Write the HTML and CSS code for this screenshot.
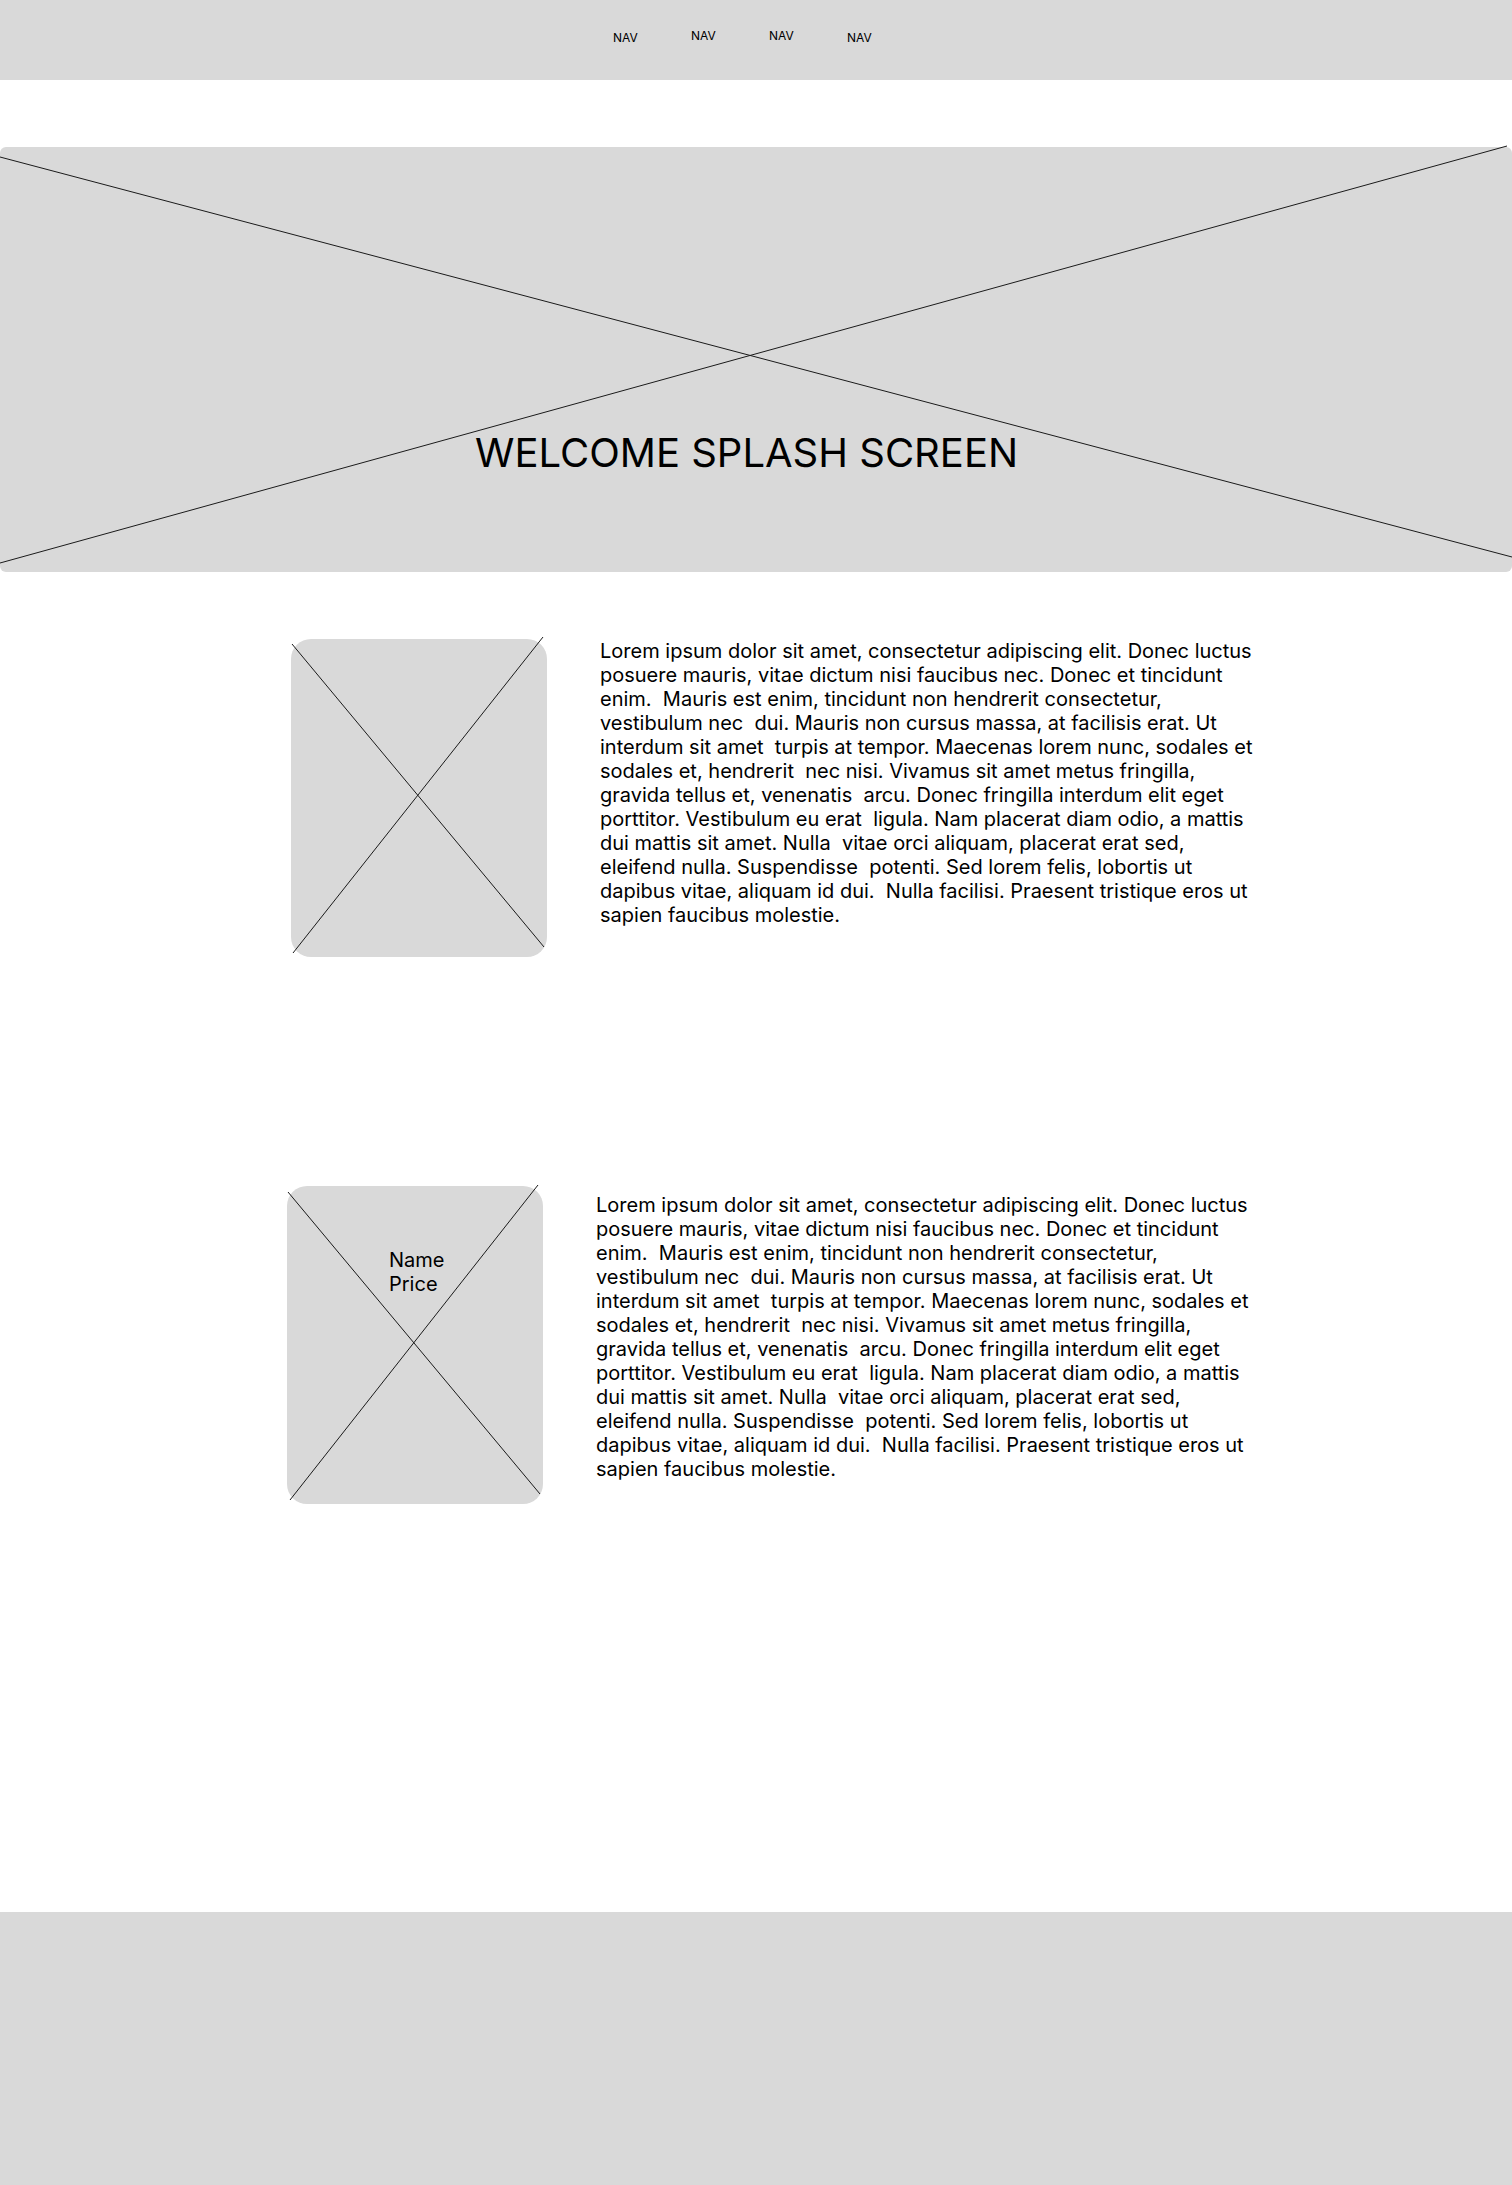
FILE: index.html
```html
<!DOCTYPE html>
<html lang="en">
<head>
<meta charset="utf-8">
<title>Wireframe</title>
<link rel="stylesheet" href="styles.css">
</head>
<body>
<header class="topbar">
  <nav class="nav">
    <span class="nav-item nav-item-low">NAV</span>
    <span class="nav-item">NAV</span>
    <span class="nav-item">NAV</span>
    <span class="nav-item nav-item-low">NAV</span>
  </nav>
</header>

<section class="hero">
  <svg class="hero-x" viewBox="0 0 1512 425" preserveAspectRatio="none">
    <line x1="0" y1="10" x2="1512" y2="410"/>
    <line x1="1507" y1="-1" x2="0" y2="416"/>
  </svg>
  <h1 class="hero-title">WELCOME SPLASH SCREEN</h1>
</section>

<main class="content">
  <div class="row row-one">
    <div class="placeholder">
      <svg class="ph-x" viewBox="0 0 256 318">
        <line x1="1" y1="5" x2="253" y2="308"/>
        <line x1="252" y1="-2" x2="2" y2="314"/>
      </svg>
    </div>
    <p class="copy">Lorem ipsum dolor sit amet, consectetur adipiscing elit. Donec luctus posuere mauris, vitae dictum nisi faucibus nec. Donec et tincidunt enim.&nbsp; Mauris est enim, tincidunt non hendrerit consectetur, vestibulum nec&nbsp; dui. Mauris non cursus massa, at facilisis erat. Ut interdum sit amet&nbsp; turpis at tempor. Maecenas lorem nunc, sodales et sodales et, hendrerit&nbsp; nec nisi. Vivamus sit amet metus fringilla, gravida tellus et, venenatis&nbsp; arcu. Donec fringilla interdum elit eget porttitor. Vestibulum eu erat&nbsp; ligula. Nam placerat diam odio, a mattis dui mattis sit amet. Nulla&nbsp; vitae orci aliquam, placerat erat sed, eleifend nulla. Suspendisse&nbsp; potenti. Sed lorem felis, lobortis ut dapibus vitae, aliquam id dui.&nbsp; Nulla facilisi. Praesent tristique eros ut sapien faucibus molestie.</p>
  </div>

  <div class="row row-two">
    <div class="placeholder">
      <svg class="ph-x" viewBox="0 0 256 318">
        <line x1="1" y1="6" x2="253" y2="308"/>
        <line x1="251" y1="-1" x2="3" y2="314"/>
      </svg>
      <div class="product-label">
        <span>Name</span>
        <span>Price</span>
      </div>
    </div>
    <p class="copy copy-two">Lorem ipsum dolor sit amet, consectetur adipiscing elit. Donec luctus posuere mauris, vitae dictum nisi faucibus nec. Donec et tincidunt enim.&nbsp; Mauris est enim, tincidunt non hendrerit consectetur, vestibulum nec&nbsp; dui. Mauris non cursus massa, at facilisis erat. Ut interdum sit amet&nbsp; turpis at tempor. Maecenas lorem nunc, sodales et sodales et, hendrerit&nbsp; nec nisi. Vivamus sit amet metus fringilla, gravida tellus et, venenatis&nbsp; arcu. Donec fringilla interdum elit eget porttitor. Vestibulum eu erat&nbsp; ligula. Nam placerat diam odio, a mattis dui mattis sit amet. Nulla&nbsp; vitae orci aliquam, placerat erat sed, eleifend nulla. Suspendisse&nbsp; potenti. Sed lorem felis, lobortis ut dapibus vitae, aliquam id dui.&nbsp; Nulla facilisi. Praesent tristique eros ut sapien faucibus molestie.</p>
  </div>
</main>

<footer class="footer"></footer>
</body>
</html>
```

FILE: styles.css
```css
* { box-sizing: border-box; }

html, body {
  margin: 0;
  padding: 0;
  background: #ffffff;
}

body {
  font-family: Inter, "Noto Sans", "Liberation Sans", Arial, sans-serif;
  color: #000000;
  width: 1512px;
  min-height: 2185px;
  display: flex;
  flex-direction: column;
}

.topbar {
  height: 80px;
  background: #d9d9d9;
  flex: none;
}

.nav {
  display: flex;
  align-items: flex-start;
  gap: 54px;
  padding-left: 613px;
  padding-top: 28px;
}

.nav-item {
  font-size: 12px;
  line-height: 16px;
  color: #000;
  width: 24px;
  white-space: nowrap;
}

.nav-item-low {
  margin-top: 2px;
}

.hero {
  position: relative;
  margin-top: 67px;
  height: 425px;
  background: #d9d9d9;
  border-radius: 6px;
  flex: none;
  padding-top: 282px;
  padding-left: 475px;
}

.hero-x {
  position: absolute;
  left: 0;
  top: 0;
  width: 1512px;
  height: 425px;
  overflow: visible;
}

.hero-x line,
.ph-x line {
  stroke: #1a1a1a;
  stroke-width: 1;
}

.hero-title {
  position: relative;
  margin: 0;
  font-weight: 400;
  font-size: 40px;
  line-height: 48px;
  white-space: nowrap;
}

.content {
  flex: 1;
  display: flex;
  flex-direction: column;
  gap: 229px;
  padding-top: 67px;
  padding-bottom: 408px;
}

.row {
  display: flex;
  align-items: flex-start;
}

.row-one { padding-left: 291px; gap: 53px; }
.row-two { padding-left: 287px; gap: 53px; }

.placeholder {
  position: relative;
  width: 256px;
  height: 318px;
  background: #d9d9d9;
  border-radius: 20px;
  flex: none;
  padding-top: 62px;
  padding-left: 102px;
}

.ph-x {
  position: absolute;
  left: 0;
  top: 0;
  width: 256px;
  height: 318px;
  overflow: visible;
}

.product-label {
  position: relative;
  display: flex;
  flex-direction: column;
  font-size: 20px;
  line-height: 24px;
}

.copy {
  margin: 0;
  width: 658px;
  font-size: 20px;
  line-height: 24px;
}

.copy-two {
  margin-top: 7px;
}

.footer {
  height: 273px;
  background: #d9d9d9;
  flex: none;
}
```
